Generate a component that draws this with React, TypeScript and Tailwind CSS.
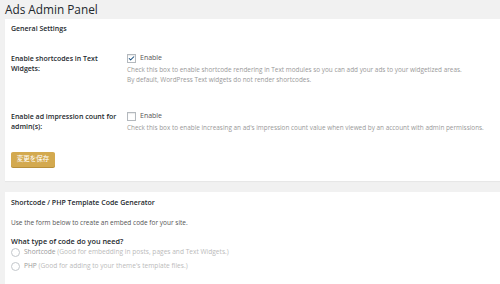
import { Check } from 'lucide-react';

const font = { fontFamily: '"Open Sans", "Noto Sans CJK JP", sans-serif' };

function CheckRow({ checked, desc }: { checked: boolean; desc: string[] }) {
  return (
    <div className="min-w-0 flex-1">
      <div className="flex h-[10px] items-center">
        <span className="flex h-[9px] w-[9px] shrink-0 items-center justify-center border border-[#b4b9be] bg-white shadow-[inset_0_1px_1px_rgba(0,0,0,0.08)]">
          {checked && <Check size={9} strokeWidth={3.5} className="text-[#1b4f7e]" />}
        </span>
        <span className="ml-[4px] text-[7px] leading-[10px] text-[#555]">Enable</span>
      </div>
      <div className="mt-[2px] whitespace-nowrap text-[6.4px] leading-[10px] text-[#999]">
        {desc.map((line) => (
          <div key={line}>{line}</div>
        ))}
      </div>
    </div>
  );
}

export default function App() {
  return (
    <div className="h-[284px] w-[500px] overflow-hidden bg-[#f1f1f1] px-[5px]" style={font}>
      {/* Page title */}
      <h1 className="h-[19px] text-[11.8px] leading-[18px] text-[#23282d]">Ads Admin Panel</h1>

      {/* General settings */}
      <div className="-mr-[10px] bg-white pb-[14px] pl-[6px] pt-[4px] shadow-[0_1px_1px_rgba(0,0,0,0.04)]">
        <h2 className="text-[7px] font-semibold leading-[12px] text-[#23282d]">General Settings</h2>

        <div className="mt-[18px] flex items-start">
          <div className="w-[116px] shrink-0 pt-[1px] text-[7px] font-semibold leading-[10px] text-[#23282d]">
            Enable shortcodes in Text Widgets:
          </div>
          <CheckRow
            checked
            desc={[
              'Check this box to enable shortcode rendering in Text modules so you can add your ads to your widgetized areas.',
              'By default, WordPress Text widgets do not render shortcodes.',
            ]}
          />
        </div>

        <div className="mt-[26px] flex items-start">
          <div className="w-[116px] shrink-0 pt-[1px] text-[7px] font-semibold leading-[10px] text-[#23282d]">
            Enable ad impression count for admin(s):
          </div>
          <CheckRow
            checked={false}
            desc={[
              "Check this box to enable increasing an ad's impression count value when viewed by an account with admin permissions.",
            ]}
          />
        </div>

        <button className="mt-[19px] flex h-[15px] w-[44px] items-center justify-center rounded-[2px] bg-[#d3a94f] text-[6.5px] leading-none text-white shadow-[0_1px_0_#b88f3a]">
          変更を保存
        </button>
      </div>

      {/* Code generator */}
      <div className="-mr-[10px] mt-[11px] h-[100px] bg-white pl-[6px] pt-[5px]">
        <h2 className="text-[7px] font-semibold leading-[12px] text-[#23282d]">
          Shortcode / PHP Template Code Generator
        </h2>
        <p className="mt-[9px] text-[6.5px] leading-[10px] text-[#555]">
          Use the form below to create an embed code for your site.
        </p>
        <p className="mt-[7px] text-[7.3px] font-semibold leading-[12px] text-[#23282d]">What type of code do you need?</p>
        <div className="flex h-[10px] items-center">
          <span className="h-[9px] w-[9px] shrink-0 rounded-full border border-[#c3c7cb] bg-white" />
          <span className="ml-[4px] text-[6.6px] text-[#999]">
            Shortcode <span className="text-[#bbb]">(Good for embedding in posts, pages and Text Widgets.)</span>
          </span>
        </div>
        <div className="mt-[4px] flex h-[10px] items-center">
          <span className="h-[9px] w-[9px] shrink-0 rounded-full border border-[#c3c7cb] bg-white" />
          <span className="ml-[4px] text-[6.6px] text-[#999]">
            PHP <span className="text-[#bbb]">(Good for adding to your theme's template files.)</span>
          </span>
        </div>
      </div>
    </div>
  );
}
